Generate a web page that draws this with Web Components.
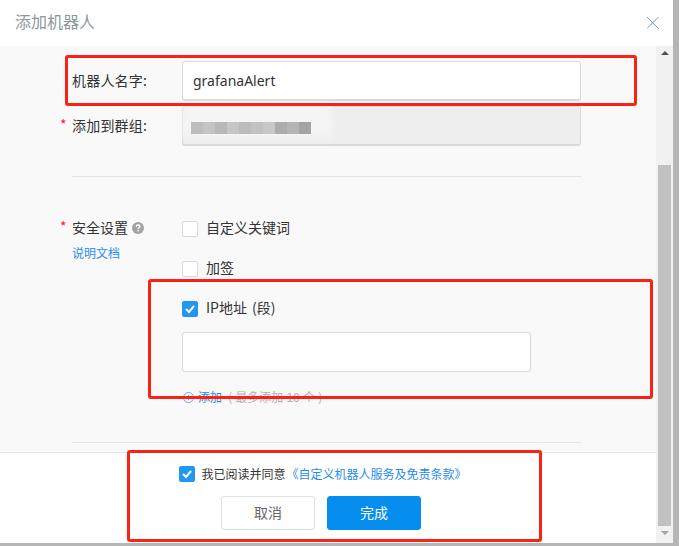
<!DOCTYPE html>
<html lang="zh">
<head>
<meta charset="utf-8">
<title>添加机器人</title>
<style>
  html, body { margin: 0; padding: 0; }
  body {
    width: 679px;
    height: 546px;
    overflow: hidden;
    background: #b5b5b5;
    font-family: "Noto Sans CJK SC", "Noto Sans", sans-serif;
  }
</style>
</head>
<body>
<robot-dialog>
  <span slot="title">添加机器人</span>

  <form-row required>
    <span slot="label">机器人名字:</span>
    <text-box value="grafanaAlert"></text-box>
  </form-row>
  <form-row required star>
    <span slot="label">添加到群组:</span>
    <text-box disabled><blur-name></blur-name></text-box>
  </form-row>
  <form-line top="30"></form-line>

  <security-row>
    <check-row>自定义关键词</check-row>
    <check-row>加签</check-row>
    <check-row checked>IP地址 (段)</check-row>
  </security-row>

  <form-line top="35"></form-line>

  <span slot="agree">我已阅读并同意</span>
  <a slot="terms">《自定义机器人服务及免责条款》</a>
</robot-dialog>

<script>
class RobotDialog extends HTMLElement {
  constructor() {
    super();
    this.attachShadow({mode: 'open'}).innerHTML = `
      <style>
        :host {
          display: flex;
          flex-direction: column;
          position: relative;
          width: 673px;
          height: 543px;
          background: #fff;
          color: #333;
          font-size: 14px;
        }
        header {
          flex: none;
          height: 46px;
          display: flex;
          align-items: center;
          justify-content: space-between;
          padding: 0 14px 1px 15px;
          box-sizing: border-box;
          color: #8d969e;
          font-size: 16px;
        }
        header .name { padding-bottom: 4px; }
        header svg { display: block; }
        .main { flex: 1; display: flex; min-height: 0; }
        .column { flex: 1; display: flex; flex-direction: column; min-width: 0; }
        .form {
          height: 406px;
          box-sizing: border-box;
          padding: 15px 75px 0 72px;
          background: #f9f9f9;
          overflow: hidden;
        }
        footer {
          flex: 1;
          border-top: 1px solid #e8e8e8;
          display: flex;
          flex-direction: column;
          align-items: center;
          background: #fff;
        }
        .agree {
          display: flex;
          align-items: center;
          gap: 6px;
          margin-top: 13px;
          margin-left: -10px;
          font-size: 12px;
          height: 16px;
          white-space: nowrap;
        }
        .agree ::slotted(a) { color: #1f8ceb; margin-left: 1px; }
        .agree .text { display: flex; padding-bottom: 1px; }
        .buttons { display: flex; gap: 12px; margin-top: 14px; margin-left: -14px; }
        .red {
          position: absolute;
          box-sizing: border-box;
          border: 3px solid #fb2115;
          border-radius: 3px;
          pointer-events: none;
        }
      </style>
      <header>
        <div class="name"><slot name="title"></slot></div>
        <svg width="13" height="13" viewBox="0 0 13 13" fill="none" stroke="#7d9ab5" stroke-width="1"><path d="M1 1L12.500 12.500M12.500 1L1 12.500"/></svg>
      </header>
      <div class="main">
        <div class="column">
          <div class="form"><slot></slot></div>
          <footer>
            <div class="agree">
              <check-mark checked></check-mark>
              <div class="text"><slot name="agree"></slot><slot name="terms"></slot></div>
            </div>
            <div class="buttons">
              <dialog-button>取消</dialog-button>
              <dialog-button primary>完成</dialog-button>
            </div>
          </footer>
        </div>
        <dialog-scrollbar></dialog-scrollbar>
      </div>
      <div class="red" style="left:65px;top:55px;width:572px;height:51px"></div>
      <div class="red" style="left:148px;top:279px;width:505px;height:120px"></div>
      <div class="red" style="left:127px;top:450px;width:415px;height:92px"></div>
    `;
  }
}

class FormRow extends HTMLElement {
  constructor() {
    super();
    this.attachShadow({mode: 'open'}).innerHTML = `
      <style>
        :host { display: flex; height: 40px; margin-bottom: 5px; align-items: center; position: relative; }
        .label { flex: none; width: 110px; white-space: nowrap; padding-bottom: 3px; letter-spacing: .2px; }
        .star { position: absolute; left: -12px; top: 10px; color: #f5222d; font-size: 14px; line-height: 16px; }
        .box { flex: 1; }
      </style>
      ${this.hasAttribute('star') ? '<span class="star">*</span>' : ''}
      <div class="label"><slot name="label"></slot></div>
      <div class="box"><slot></slot></div>
    `;
  }
}

class TextBox extends HTMLElement {
  constructor() {
    super();
    const disabled = this.hasAttribute('disabled');
    this.attachShadow({mode: 'open'}).innerHTML = `
      <style>
        :host {
          display: block;
          position: relative;
          box-sizing: border-box;
          height: 40px;
          padding: 0 10px;
          line-height: 37px;
          border: 2px solid #d9d9d9;
          border-width: 1px 1px 2px 1px;
          border-radius: 3px;
          background: ${disabled ? '#eeeeee' : '#fff'};
          font-family: "Noto Sans", sans-serif;
          font-size: 14px;
          color: #333;
        }
      </style>
      ${this.getAttribute('value') || ''}<slot></slot>
    `;
  }
}

// the group name is blurred out in the screenshot
class BlurName extends HTMLElement {
  constructor() {
    super();
    const greys = ['#bdbdbd', '#c4c4c4', '#b8b8b8', '#c6c6c6', '#bcbcbc', '#c2c2c2', '#c8c8c8', '#acacac', '#b4b4b4', '#a4a4a4'];
    this.attachShadow({mode: 'open'}).innerHTML = `
      <style>
        :host { position: absolute; left: -1px; top: -1px; right: 0; bottom: 0; display: block; overflow: visible; }
        .patch { position: absolute; left: 0; top: -2px; width: 150px; height: 34px; background: #f5f5f5; filter: blur(4px); }
        .bar { position: absolute; left: 9px; top: 16px; display: flex; height: 12px; filter: blur(.6px); }
        .bar i { width: 12px; display: block; }
      </style>
      <div class="patch"></div>
      <div class="bar">${greys.map(c => `<i style="background:${c}"></i>`).join('')}</div>
    `;
  }
}

class FormLine extends HTMLElement {
  constructor() {
    super();
    const top = this.getAttribute('top') || 0;
    this.attachShadow({mode: 'open'}).innerHTML = `
      <style>
        :host { display: block; height: 1px; background: #e4e4e4; margin-top: ${top}px; }
      </style>
    `;
  }
}

class SecurityRow extends HTMLElement {
  constructor() {
    super();
    this.attachShadow({mode: 'open'}).innerHTML = `
      <style>
        :host { display: flex; margin-top: 32px; position: relative; }
        .label { flex: none; width: 110px; }
        .title { display: flex; align-items: center; gap: 4px; height: 40px; margin-top: -2px; line-height: 40px; position: relative; }
        .title svg { display: block; margin-top: 2px; }
        .star { position: absolute; left: -12px; top: -1px; color: #f5222d; }
        .doc { color: #1f8ceb; font-size: 12px; margin-top: -2px; line-height: 16px; }
        .options { flex: 1; }
        .ip {
          box-sizing: border-box;
          width: 349px;
          height: 40px;
          margin-top: 3px;
          background: #fff;
          border: 1px solid #d9d9d9;
          border-radius: 3px;
        }
        .add { display: flex; align-items: center; gap: 4px; margin-top: 15px; font-size: 12px; line-height: 20px; color: #1f8ceb; white-space: nowrap; }
        .add svg { display: block; margin-left: 1px; }
        .add span { color: #b0b0b0; margin-left: 2px; word-spacing: .5px; }
      </style>
      <div class="label">
        <div class="title">
          <span class="star">*</span>安全设置
          <svg width="12" height="12" viewBox="0 0 12 12"><circle cx="6" cy="6" r="6" fill="#a3a3a3"/><path d="M4.200 4.600C4.300 3.500 5 3 6 3c1.100 0 1.900.6 1.900 1.500 0 1.300-1.700 1.300-1.700 2.600" fill="none" stroke="#fff" stroke-width="1.300"/><rect x="5.400" y="8" width="1.400" height="1.400" fill="#fff"/></svg>
        </div>
        <div class="doc">说明文档</div>
      </div>
      <div class="options">
        <slot></slot>
        <div class="ip"></div>
        <div class="add">
          <svg width="11" height="11" viewBox="0 0 11 11" fill="none" stroke="#6ea9f0" stroke-width="1"><circle cx="5.500" cy="5.500" r="5"/><path d="M5.500 3v5M3 5.500h5"/></svg>
          添加<span>( 最多添加 10 个 )</span>
        </div>
      </div>
    `;
  }
}

class CheckMark extends HTMLElement {
  constructor() {
    super();
    const on = this.hasAttribute('checked');
    this.attachShadow({mode: 'open'}).innerHTML = `
      <style>
        :host {
          display: block;
          flex: none;
          box-sizing: border-box;
          width: 16px;
          height: 16px;
          border-radius: 2px;
          border: 1px solid ${on ? '#2196f3' : '#d9d9d9'};
          background: ${on ? '#2196f3' : '#fff'};
        }
        svg { display: block; margin: 2px 0 0 2px; }
      </style>
      ${on ? '<svg width="10" height="10" viewBox="0 0 10 10" fill="none" stroke="#fff" stroke-width="2"><path d="M1 5l3 3 5-6"/></svg>' : ''}
    `;
  }
}

class CheckRow extends HTMLElement {
  constructor() {
    super();
    const on = this.hasAttribute('checked');
    this.attachShadow({mode: 'open'}).innerHTML = `
      <style>
        :host { display: flex; align-items: center; gap: 8px; height: 40px; font-size: 14px; white-space: nowrap; }
        .text { padding-bottom: 5px; word-spacing: 2px; }
      </style>
      <check-mark ${on ? 'checked' : ''}></check-mark>
      <span class="text"><slot></slot></span>
    `;
  }
}

class DialogButton extends HTMLElement {
  constructor() {
    super();
    const primary = this.hasAttribute('primary');
    this.attachShadow({mode: 'open'}).innerHTML = `
      <style>
        :host {
          display: flex;
          align-items: center;
          justify-content: center;
          box-sizing: border-box;
          width: 94px;
          height: 34px;
          border-radius: 3px;
          font-size: 14px;
          border: 1px solid ${primary ? '#068eef' : '#e0e0e0'};
          background: ${primary ? '#068eef' : '#fff'};
          color: ${primary ? '#fff' : '#666'};
        }
        .text { padding-bottom: 2px; }
      </style>
      <span class="text"><slot></slot></span>
    `;
  }
}

class DialogScrollbar extends HTMLElement {
  constructor() {
    super();
    this.attachShadow({mode: 'open'}).innerHTML = `
      <style>
        :host {
          flex: none;
          display: flex;
          flex-direction: column;
          align-items: center;
          width: 17px;
          background: #f1f1f1;
        }
        .up, .down { width: 0; height: 0; border: 4px solid transparent; border-left-width: 4px; }
        .up { margin-top: 5px; border-top: 0; border-bottom: 4px solid #505050; }
        .thumb { width: 13px; height: 361px; margin-top: 110px; background: #c1c1c1; }
        .down { margin-top: 5px; border-bottom: 0; border-top: 4px solid #a3a3a3; }
      </style>
      <div class="up"></div>
      <div class="thumb"></div>
      <div class="down"></div>
    `;
  }
}

customElements.define('check-mark', CheckMark);
customElements.define('check-row', CheckRow);
customElements.define('dialog-button', DialogButton);
customElements.define('dialog-scrollbar', DialogScrollbar);
customElements.define('text-box', TextBox);
customElements.define('blur-name', BlurName);
customElements.define('form-line', FormLine);
customElements.define('form-row', FormRow);
customElements.define('security-row', SecurityRow);
customElements.define('robot-dialog', RobotDialog);
</script>
</body>
</html>
